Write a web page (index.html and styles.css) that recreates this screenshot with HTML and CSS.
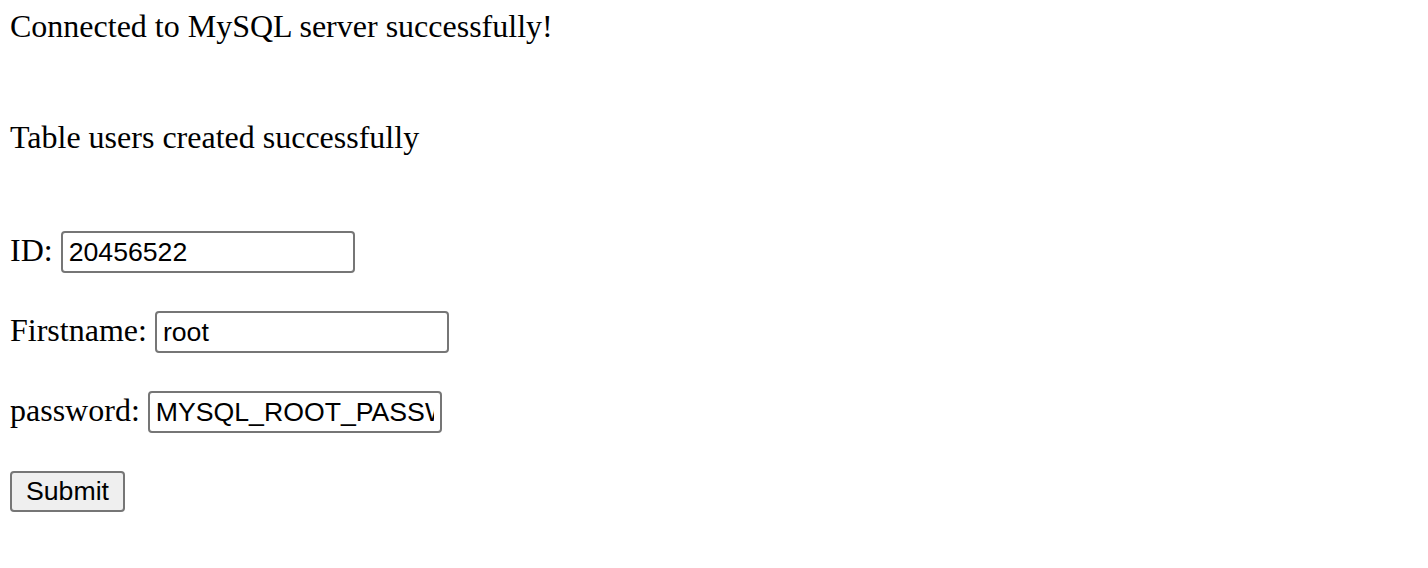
FILE: index.html
```html
<!DOCTYPE html>
<html>
<head>
<meta charset="utf-8">
<title>Users</title>
<link rel="stylesheet" href="styles.css">
</head>
<body>
<div class="page">
  <div class="msg msg-first">Connected to MySQL server successfully!</div>
  <div class="msg msg-second">Table users created successfully</div>
  <form class="form">
    <div class="row"><label class="label" for="id">ID:</label><input class="field" id="id" type="text" value="20456522"></div>
    <div class="row"><label class="label" for="fn">Firstname:</label><input class="field" id="fn" type="text" value="root"></div>
    <div class="row"><label class="label" for="pw">password:</label><input class="field" id="pw" type="text" value="MYSQL_ROOT_PASSWORD"></div>
    <div class="row"><button class="btn" type="button">Submit</button></div>
  </form>
</div>
</body>
</html>
```

FILE: styles.css
```css
html, body {
  margin: 0;
  padding: 0;
  background: #ffffff;
}

.page {
  padding: 8px 10px;
  font-family: "Liberation Serif", "Times New Roman", serif;
  font-size: 32px;
  line-height: 36px;
  color: #000000;
}

.msg {
  height: 36px;
  white-space: nowrap;
}

.msg-second {
  margin-top: 75px;
}

.form {
  margin: 76px 0 0 0;
  display: flex;
  flex-direction: column;
  gap: 38px;
}

.row {
  display: flex;
  align-items: baseline;
  height: 42px;
}

.label {
  white-space: pre;
  margin-right: 8px;
}

.field {
  box-sizing: border-box;
  width: 294px;
  height: 42px;
  margin: 0;
  padding: 0 6px;
  border: 2px solid #767676;
  border-radius: 4px;
  font-family: "Liberation Sans", Arial, sans-serif;
  font-size: 26.67px;
  color: #000000;
  background: #ffffff;
  outline: none;
}

.btn {
  box-sizing: border-box;
  height: 41px;
  margin: 0;
  padding: 0 14px;
  border: 2px solid #767676;
  border-radius: 4px;
  background: #efefef;
  font-family: "Liberation Sans", Arial, sans-serif;
  font-size: 26.67px;
  color: #000000;
}
```
